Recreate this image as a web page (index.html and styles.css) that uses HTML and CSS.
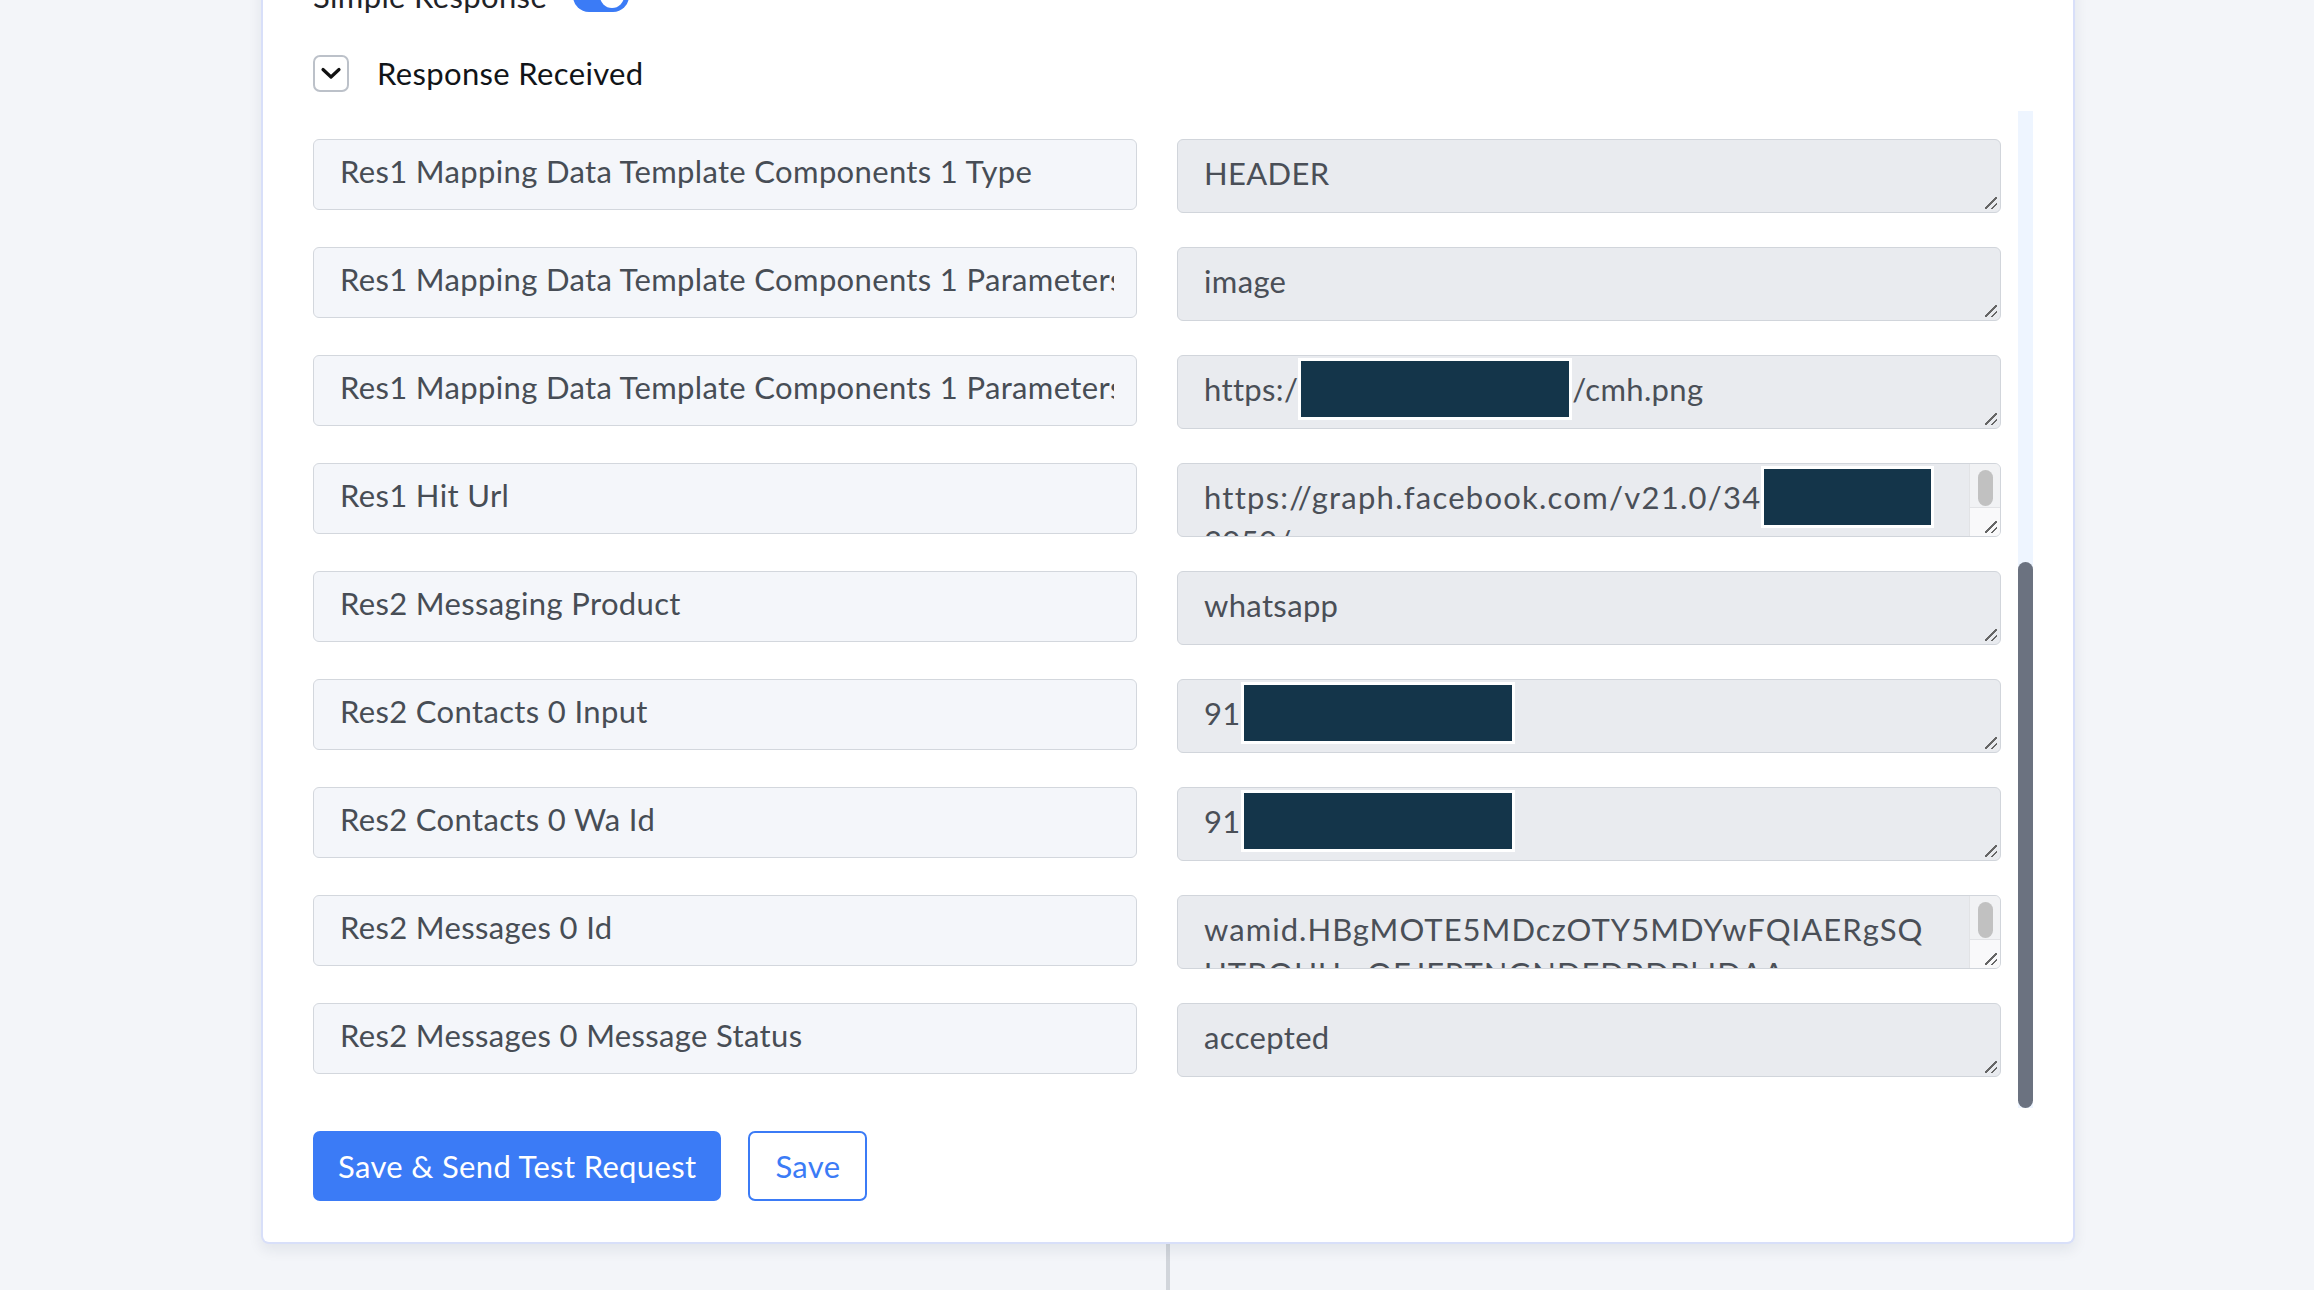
FILE: index.html
```html
<!DOCTYPE html>
<html lang="en">

<head>
    <meta charset="UTF-8">
    <title>Webhook Response</title>
    <link rel="stylesheet" href="styles.css">
</head>

<body>
    <div class="page">
        <div class="card">
            <div class="toggle-row">
                <span>Simple Response</span>
                <span class="switch"><span class="knob"></span></span>
            </div>

            <div class="section-head">
                <span class="chev-box">
                    <svg width="24" height="24" viewBox="0 0 24 24"><path d="M4 8.5l8 7.5 8-7.5" fill="none" stroke="#111" stroke-width="3.2" stroke-linecap="round" stroke-linejoin="round"/></svg>
                </span>
                <span class="section-title">Response Received</span>
            </div>

            <div class="fields-wrap">
                <div class="fields">
                    <div class="field-list">
                        <!-- earlier rows, scrolled out of view -->
                        <div class="label"><span>Res1 Mapping Id</span></div>
                        <div class="value">4821<i class="grip"></i></div>
                        <div class="label"><span>Res1 Mapping Name</span></div>
                        <div class="value">order_update<i class="grip"></i></div>
                        <div class="label"><span>Res1 Mapping Data Messaging Product</span></div>
                        <div class="value">whatsapp<i class="grip"></i></div>
                        <div class="label"><span>Res1 Mapping Data To</span></div>
                        <div class="value">91<span class="redact"></span><i class="grip"></i></div>
                        <div class="label"><span>Res1 Mapping Data Type</span></div>
                        <div class="value">template<i class="grip"></i></div>
                        <div class="label"><span>Res1 Mapping Data Template Name</span></div>
                        <div class="value">order_confirmation<i class="grip"></i></div>
                        <div class="label"><span>Res1 Mapping Data Template Language Code</span></div>
                        <div class="value">en<i class="grip"></i></div>
                        <div class="label"><span>Res1 Mapping Data Template Components 0 Type</span></div>
                        <div class="value">BODY<i class="grip"></i></div>

                        <!-- visible rows -->
                        <div class="label"><span>Res1 Mapping Data Template Components 1 Type</span></div>
                        <div class="value">HEADER<i class="grip"></i></div>
                        <div class="label"><span>Res1 Mapping Data Template Components 1 Parameters 0 Type</span></div>
                        <div class="value">image<i class="grip"></i></div>
                        <div class="label"><span>Res1 Mapping Data Template Components 1 Parameters 0 Image Link</span></div>
                        <div class="value"><span class="line">https:/<span class="redact"></span>/cmh.png</span><i class="grip"></i></div>
                        <div class="label"><span>Res1 Hit Url</span></div>
                        <div class="value has-scroll">
                            <span class="line wide">https://graph.facebook.com/v21.0/34<span class="redact short"></span></span>
                            <span class="line">3050/messages</span>
                            <span class="vscroll"><span class="thumb"></span><span class="corner"><i class="grip"></i></span></span>
                        </div>
                        <div class="label"><span>Res2 Messaging Product</span></div>
                        <div class="value">whatsapp<i class="grip"></i></div>
                        <div class="label"><span>Res2 Contacts 0 Input</span></div>
                        <div class="value"><span class="line">91<span class="redact"></span></span><i class="grip"></i></div>
                        <div class="label"><span>Res2 Contacts 0 Wa Id</span></div>
                        <div class="value"><span class="line">91<span class="redact"></span></span><i class="grip"></i></div>
                        <div class="label"><span>Res2 Messages 0 Id</span></div>
                        <div class="value has-scroll">
                            <span class="line mid">wamid.HBgMOTE5MDczOTY5MDYwFQIAERgSQ</span>
                            <span class="line mid">UTBQUUwOEJFRTNGNDFDRDBkIDAA</span>
                            <span class="vscroll"><span class="thumb"></span><span class="corner"><i class="grip"></i></span></span>
                        </div>
                        <div class="label"><span>Res2 Messages 0 Message Status</span></div>
                        <div class="value">accepted<i class="grip"></i></div>
                    </div>
                </div>
                <div class="scrollbar"><span class="scroll-thumb"></span></div>
            </div>

            <div class="actions">
                <button class="btn btn-primary">Save &amp; Send Test Request</button>
                <button class="btn btn-outline">Save</button>
            </div>
        </div>
        <div class="connector"></div>
    </div>
</body>

</html>
```

FILE: styles.css
```css
body {
    margin: 0;
    background: #f3f5f9;
    font-family: Lato, "Liberation Sans", sans-serif;
    color: #1f2328;
}

.page {
    padding-top: 1px;
    margin-top: -1px;
}

.card {
    position: relative;
    box-sizing: border-box;
    width: 1814px;
    margin: -40px 0 0 261px;
    padding: 20px 40px 41px 50px;
    background: #fff;
    border: 2px solid #d8dff9;
    border-top: none;
    border-radius: 0 0 8px 8px;
    box-shadow: 0 6px 14px rgba(30, 40, 70, 0.08);
}

.toggle-row {
    display: flex;
    align-items: center;
    gap: 26px;
    height: 32px;
    font-size: 31px;
    letter-spacing: 0.35px;
}

.switch {
    position: relative;
    width: 56px;
    height: 32px;
    border-radius: 16px;
    background: #3b7bf6;
}

.knob {
    position: absolute;
    top: 4px;
    right: 5px;
    width: 24px;
    height: 24px;
    border-radius: 50%;
    background: #fff;
}

.section-head {
    display: flex;
    align-items: center;
    gap: 28px;
    margin-top: 43px;
    height: 36px;
}

.chev-box {
    box-sizing: border-box;
    width: 36px;
    height: 37px;
    border: 2px solid #bcc1c9;
    border-radius: 7px;
    display: flex;
    align-items: center;
    justify-content: center;
}

.section-title {
    font-size: 31px;
    letter-spacing: 0.35px;
    color: #111418;
}

.fields-wrap {
    display: flex;
    margin-top: 20px;
    height: 997px;
}

.fields {
    flex: 1;
    min-width: 0;
    display: flex;
    flex-direction: column;
    justify-content: flex-end;
    overflow: hidden;
}

.scrollbar {
    width: 15px;
    display: flex;
    flex-direction: column;
    justify-content: flex-end;
    background: #eef5ff;
}

.scroll-thumb {
    height: 546px;
    border-radius: 8px;
    background: #6b7280;
}

.field-list {
    flex-shrink: 0;
    display: grid;
    grid-template-columns: minmax(0, 1fr) minmax(0, 1fr);
    column-gap: 40px;
    row-gap: 34px;
    align-items: start;
    padding: 0 17px 31px 0;
}

.label {
    box-sizing: border-box;
    height: 71px;
    padding: 0 22px 0 26px;
    background: #f4f6fa;
    border: 1px solid #d3d7dd;
    border-radius: 6px;
    font-size: 31px;
    letter-spacing: 0.35px;
    line-height: 63px;
    color: #474d55;
}

.label span {
    display: block;
    white-space: nowrap;
    overflow: hidden;
}

.value {
    position: relative;
    box-sizing: border-box;
    height: 74px;
    padding: 11px 26px;
    background: #e9ebef;
    border: 1px solid #d1d5db;
    border-radius: 6px;
    font-size: 31px;
    letter-spacing: 0.35px;
    line-height: 44px;
    color: #4a4f57;
    overflow: hidden;
}

.value .line {
    white-space: nowrap;
}

.has-scroll .line {
    display: block;
}

.line.wide {
    letter-spacing: 1.25px;
}

.line.mid {
    letter-spacing: 1.05px;
}

.has-scroll {
    padding-right: 40px;
}

.redact {
    display: inline-block;
    box-sizing: border-box;
    width: 274px;
    height: 62px;
    margin: -9px 0;
    vertical-align: top;
    background: #14354a;
    border: 3px solid #fff;
}

.redact.short {
    width: 173px;
}

.grip {
    position: absolute;
    right: 3px;
    bottom: 3px;
    width: 12px;
    height: 12px;
    background:
        linear-gradient(135deg, transparent 44%, #666 44%, #666 58%, transparent 58%) no-repeat 0 0 / 12px 12px,
        linear-gradient(135deg, transparent 42%, #666 42%, #666 62%, transparent 62%) no-repeat 6px 6px / 6px 6px;
}

.vscroll {
    position: absolute;
    top: 0;
    right: 0;
    bottom: 0;
    width: 30px;
    background: #f1f2f4;
    border-left: 1px solid #e2e3e6;
}

.thumb {
    position: absolute;
    top: 6px;
    left: 8px;
    width: 15px;
    height: 36px;
    border-radius: 8px;
    background: #c1c1c1;
}

.corner {
    position: absolute;
    left: 0;
    right: 0;
    bottom: 0;
    height: 28px;
    background: #f9f9fa;
    border-top: 1px solid #e2e3e6;
}

.actions {
    display: flex;
    gap: 27px;
    margin-top: 23px;
}

.btn {
    height: 70px;
    padding: 0 25px;
    border-radius: 7px;
    font-family: Lato, "Liberation Sans", sans-serif;
    font-size: 31px;
    letter-spacing: 0.35px;
    cursor: pointer;
}

.btn-primary {
    background: #3b7bf6;
    border: none;
    color: #fff;
}

.btn-outline {
    background: #fff;
    border: 2px solid #3b7bf6;
    color: #3b7bf6;
}

.connector {
    width: 4px;
    height: 80px;
    margin-left: 1166px;
    background: #d1d5db;
}
```
